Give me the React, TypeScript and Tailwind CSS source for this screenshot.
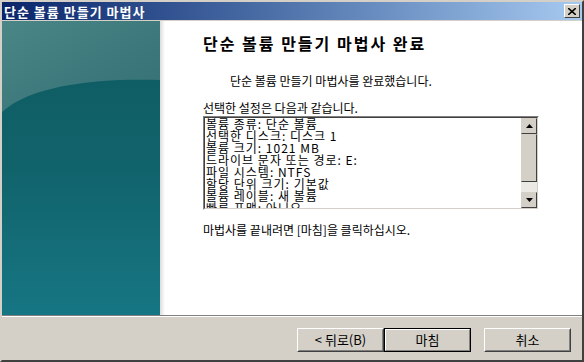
import React from "react";

const font = { fontFamily: '"Noto Sans CJK KR", "Noto Sans", sans-serif' };

const settings = [
  "볼륨 종류: 단순 볼륨",
  "선택한 디스크: 디스크 1",
  "볼륨 크기: 1021 MB",
  "드라이브 문자 또는 경로: E:",
  "파일 시스템: NTFS",
  "할당 단위 크기: 기본값",
  "볼륨 레이블: 새 볼륨",
  "빠른 포맷: 아니오",
];

const WizardButton = ({ label, primary }: { label: string; primary?: boolean }) => (
  <button
    className={
      primary
        ? "w-[87px] h-[24px] bg-[#d4d0c8] border border-black text-[13px] text-black"
        : "w-[87px] h-[24px] bg-[#d4d0c8] border border-t-white border-l-white border-r-[#404040] border-b-[#404040] text-[13px] text-black"
    }
  >
    {primary ? (
      <span className="flex items-center justify-center w-full h-full border border-t-white border-l-white border-r-[#808080] border-b-[#808080]">
        {label}
      </span>
    ) : (
      <span className="flex items-center justify-center w-full h-full border border-t-[#d4d0c8] border-l-[#d4d0c8] border-r-[#808080] border-b-[#808080]">
        {label}
      </span>
    )}
  </button>
);

const ScrollArrow = ({ down }: { down?: boolean }) => (
  <div className="w-[16px] h-[16px] bg-[#d4d0c8] border border-t-[#d4d0c8] border-l-[#d4d0c8] border-r-[#404040] border-b-[#404040] flex items-center justify-center">
    <svg width="7" height="4" viewBox="0 0 7 4">
      {down ? <polygon points="0,0 7,0 3.5,4" fill="black" /> : <polygon points="0,4 7,4 3.5,0" fill="black" />}
    </svg>
  </div>
);

export default function App() {
  return (
    <div
      className="w-[584px] h-[362px] bg-[#d4d0c8] border-2 border-t-[#d4d0c8] border-l-[#d4d0c8] border-r-[#404040] border-b-[#404040] flex flex-col overflow-hidden"
      style={font}
    >
      {/* title bar */}
      <div className="h-[18px] flex items-center justify-between pl-[2px] pr-[2px] bg-gradient-to-r from-[#0a246a] to-[#a6caf0]">
        <span className="text-white text-[13px] font-bold leading-none tracking-[1px]">단순 볼륨 만들기 마법사</span>
        <div className="w-[16px] h-[14px] bg-[#d4d0c8] border border-t-white border-l-white border-r-[#404040] border-b-[#404040] flex items-center justify-center">
          <svg width="8" height="7" viewBox="0 0 8 7">
            <path d="M0 0 L8 7 M8 0 L0 7" stroke="black" strokeWidth="1.6" />
          </svg>
        </div>
      </div>

      {/* body */}
      <div className="flex mt-[1px] h-[294px] bg-white">
        <div className="w-[158px] h-full relative bg-gradient-to-b from-[#0e5a60] via-[#11636b] to-[#167683] overflow-hidden">
          <svg className="absolute inset-0" width="158" height="294" viewBox="0 0 158 294">
            <defs>
              <linearGradient id="band" x1="0" y1="0" x2="1" y2="1">
                <stop offset="0" stopColor="#4a8686" />
                <stop offset="1" stopColor="#336f74" />
              </linearGradient>
            </defs>
            <path d="M0 0 H158 V59 C100 57 30 63 0 91 Z" fill="url(#band)" />
          </svg>
        </div>
        <div className="w-[5px] h-full bg-gradient-to-r from-[#dcdcdc] to-white" />
        <div className="flex-1 pl-[38px] pt-[12px] text-black">
          <div className="text-[16px] font-bold leading-[20px] tracking-[2px]">단순 볼륨 만들기 마법사 완료</div>
          <div className="pl-[27px] mt-[21px] text-[12px] leading-[14px]">단순 볼륨 만들기 마법사를 완료했습니다.</div>
          <div className="mt-[13px] text-[12px] leading-[14px]">선택한 설정은 다음과 같습니다.</div>
          <div className="mt-[1px] w-[336px] h-[94px] flex border border-t-[#808080] border-l-[#808080] border-r-white border-b-white">
            <div className="flex-1 flex border border-t-[#404040] border-l-[#404040] border-r-[#d4d0c8] border-b-[#d4d0c8] bg-white overflow-hidden">
              <div className="flex-1 pl-[1px] text-[12px] leading-[12px] tracking-[1px] overflow-hidden">
                {settings.map((s) => (
                  <div key={s} className="whitespace-nowrap">{s}</div>
                ))}
              </div>
              <div className="w-[16px] flex flex-col">
                <ScrollArrow />
                <div className="h-[48px] bg-[#d4d0c8] border border-t-[#d4d0c8] border-l-[#d4d0c8] border-r-[#404040] border-b-[#404040]" />
                <div className="flex-1 bg-[#ebe9e4]" />
                <ScrollArrow down />
              </div>
            </div>
          </div>
          <div className="mt-[13px] text-[12px] leading-[14px]">마법사를 끝내려면 [마침]을 클릭하십시오.</div>
        </div>
      </div>

      {/* separator */}
      <div className="h-[1px] bg-[#808080]" />
      <div className="h-[1px] bg-white" />

      {/* buttons */}
      <div className="flex-1 flex items-start justify-end pt-[11px] pr-[11px]">
        <WizardButton label="< 뒤로(B)" />
        <WizardButton label="마침" primary />
        <div className="w-[13px]" />
        <WizardButton label="취소" />
      </div>
    </div>
  );
}
